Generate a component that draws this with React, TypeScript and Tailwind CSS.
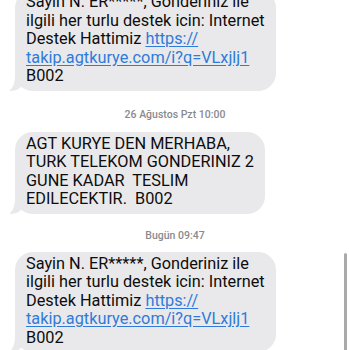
import React from "react";

const bubbleFont = { fontFamily: "Roboto, 'Liberation Sans', Arial, sans-serif" };

function Tail() {
  return (
    <svg
      className="absolute -left-[6px] bottom-0"
      width="16"
      height="16"
      viewBox="0 0 16 16"
    >
      <path d="M6 0 C6 8 4 13 0 16 C5 16 9 15 12 12 L16 0 Z" fill="#e9e9eb" />
    </svg>
  );
}

function Bubble({ children, className = "" }: { children: React.ReactNode; className?: string }) {
  return (
    <div className={`relative self-start ml-[15px] ${className}`}>
      <Tail />
      <div
        className="relative rounded-[18px] bg-[#e9e9eb] px-[11px] pt-[3px] pb-[5px] text-[16.3px] leading-[18.5px] text-[#0d0d0d] whitespace-pre"
        style={bubbleFont}
      >
        {children}
      </div>
    </div>
  );
}

function Stamp({ children }: { children: React.ReactNode }) {
  return (
    <div
      className="text-center text-[10.5px] leading-[12px] font-medium text-[#8a8a8e]"
      style={bubbleFont}
    >
      {children}
    </div>
  );
}

function Link({ children }: { children: React.ReactNode }) {
  return <span className="text-[#2f7bd9] underline underline-offset-[2px]">{children}</span>;
}

function SupportMessage() {
  return (
    <>
      <div>Sayin N. ER*****, Gonderiniz ile</div>
      <div>ilgili her turlu destek icin: Internet</div>
      <div>
        Destek Hattimiz <Link>https://</Link>
      </div>
      <div>
        <Link>takip.agtkurye.com/i?q=VLxjlj1</Link>
      </div>
      <div>B002</div>
    </>
  );
}

export default function App() {
  return (
    <div className="relative w-[350px] h-[350px] overflow-hidden bg-white">
      <div className="flex flex-col">
        <Bubble className="-mt-[10px]">
          <SupportMessage />
        </Bubble>

        <div className="mt-[18px] mb-[11px]">
          <Stamp>26 Ağustos Pzt 10:00</Stamp>
        </div>

        <Bubble>
          <div>AGT KURYE DEN MERHABA,</div>
          <div>TURK TELEKOM GONDERINIZ 2</div>
          <div>GUNE KADAR  TESLIM</div>
          <div>EDILECEKTIR.  B002</div>
        </Bubble>

        <div className="mt-[16px] mb-[10px]">
          <Stamp>Bugün 09:47</Stamp>
        </div>

        <Bubble>
          <SupportMessage />
        </Bubble>
      </div>

      {/* scroll indicator */}
      <div className="absolute right-[3px] top-[253px] w-[3px] h-[110px] rounded-full bg-[#a9a9a9]" />
    </div>
  );
}
